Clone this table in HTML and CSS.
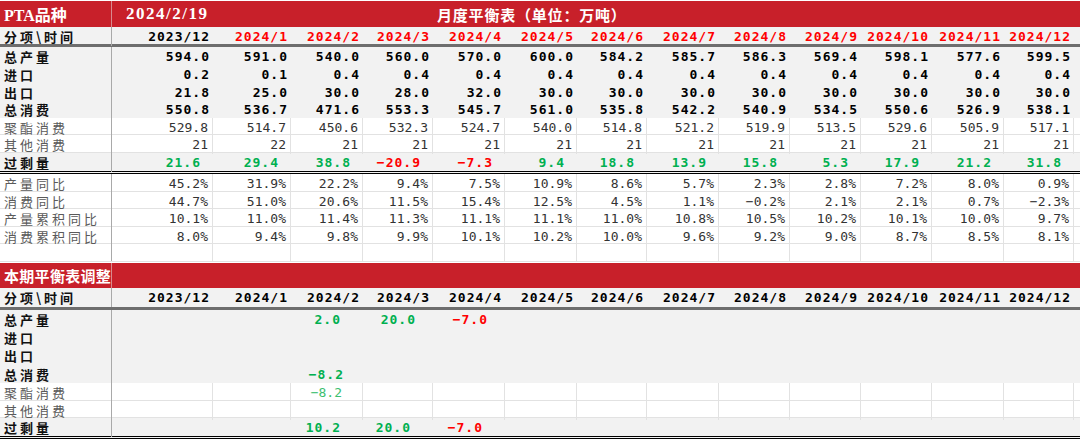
FILE: index.html
```html
<!DOCTYPE html>
<html lang="zh">
<head>
<meta charset="utf-8">
<title>PTA月度平衡表</title>
<link rel="stylesheet" href="styles.css">
</head>
<body>
<div class="sheet">
  <div class="topgap"></div>

  <div class="bar bar-title">
    <div class="bar-first">PTA品种</div>
    <div class="bar-date">2024/2/19</div>
    <div class="bar-caption">月度平衡表（单位：万吨）</div>
  </div>

  <div class="row g head h17">
    <div class="lab b">分项\时间</div>
    <div class="c b">2023/12</div>
    <div class="c b red">2024/1</div><div class="c b red">2024/2</div><div class="c b red">2024/3</div>
    <div class="c b red">2024/4</div><div class="c b red">2024/5</div><div class="c b red">2024/6</div>
    <div class="c b red">2024/7</div><div class="c b red">2024/8</div><div class="c b red">2024/9</div>
    <div class="c b red">2024/10</div><div class="c b red">2024/11</div><div class="c b red">2024/12</div>
  </div>

  <div class="row g h18">
    <div class="lab b">总产量</div>
    <div class="c b">594.0</div><div class="c b">591.0</div><div class="c b">540.0</div><div class="c b">560.0</div>
    <div class="c b">570.0</div><div class="c b">600.0</div><div class="c b">584.2</div><div class="c b">585.7</div>
    <div class="c b">586.3</div><div class="c b">569.4</div><div class="c b">598.1</div><div class="c b">577.6</div>
    <div class="c b">599.5</div>
  </div>
  <div class="row g h18">
    <div class="lab b">进口</div>
    <div class="c b">0.2</div><div class="c b">0.1</div><div class="c b">0.4</div><div class="c b">0.4</div>
    <div class="c b">0.4</div><div class="c b">0.4</div><div class="c b">0.4</div><div class="c b">0.4</div>
    <div class="c b">0.4</div><div class="c b">0.4</div><div class="c b">0.4</div><div class="c b">0.4</div>
    <div class="c b">0.4</div>
  </div>
  <div class="row g h17">
    <div class="lab b">出口</div>
    <div class="c b">21.8</div><div class="c b">25.0</div><div class="c b">30.0</div><div class="c b">28.0</div>
    <div class="c b">32.0</div><div class="c b">30.0</div><div class="c b">30.0</div><div class="c b">30.0</div>
    <div class="c b">30.0</div><div class="c b">30.0</div><div class="c b">30.0</div><div class="c b">30.0</div>
    <div class="c b">30.0</div>
  </div>
  <div class="row g h18">
    <div class="lab b">总消费</div>
    <div class="c b">550.8</div><div class="c b">536.7</div><div class="c b">471.6</div><div class="c b">553.3</div>
    <div class="c b">545.7</div><div class="c b">561.0</div><div class="c b">535.8</div><div class="c b">542.2</div>
    <div class="c b">540.9</div><div class="c b">534.5</div><div class="c b">550.6</div><div class="c b">526.9</div>
    <div class="c b">538.1</div>
  </div>
  <div class="row w h17">
    <div class="lab">聚酯消费</div>
    <div class="c">529.8</div><div class="c">514.7</div><div class="c">450.6</div><div class="c">532.3</div>
    <div class="c">524.7</div><div class="c">540.0</div><div class="c">514.8</div><div class="c">521.2</div>
    <div class="c">519.9</div><div class="c">513.5</div><div class="c">529.6</div><div class="c">505.9</div>
    <div class="c">517.1</div>
  </div>
  <div class="row w h18">
    <div class="lab">其他消费</div>
    <div class="c">21</div><div class="c">22</div><div class="c">21</div><div class="c">21</div>
    <div class="c">21</div><div class="c">21</div><div class="c">21</div><div class="c">21</div>
    <div class="c">21</div><div class="c">21</div><div class="c">21</div><div class="c">21</div>
    <div class="c">21</div>
  </div>
  <div class="row g dbl h18">
    <div class="lab b">过剩量</div>
    <div class="c b ex grn">21.6</div><div class="c b ex grn">29.4</div><div class="c b ex grn">38.8</div>
    <div class="c b ex neg">−20.9</div><div class="c b ex neg">−7.3</div>
    <div class="c b ex grn">9.4</div><div class="c b ex grn">18.8</div><div class="c b ex grn">13.9</div>
    <div class="c b ex grn">15.8</div><div class="c b ex grn">5.3</div><div class="c b ex grn">17.9</div>
    <div class="c b ex grn">21.2</div><div class="c b ex grn">31.8</div>
  </div>

  <div class="row w h18">
    <div class="lab">产量同比</div>
    <div class="c">45.2%</div><div class="c">31.9%</div><div class="c">22.2%</div><div class="c">9.4%</div>
    <div class="c">7.5%</div><div class="c">10.9%</div><div class="c">8.6%</div><div class="c">5.7%</div>
    <div class="c">2.3%</div><div class="c">2.8%</div><div class="c">7.2%</div><div class="c">8.0%</div>
    <div class="c">0.9%</div>
  </div>
  <div class="row w h17">
    <div class="lab">消费同比</div>
    <div class="c">44.7%</div><div class="c">51.0%</div><div class="c">20.6%</div><div class="c">11.5%</div>
    <div class="c">15.4%</div><div class="c">12.5%</div><div class="c">4.5%</div><div class="c">1.1%</div>
    <div class="c">−0.2%</div><div class="c">2.1%</div><div class="c">2.1%</div><div class="c">0.7%</div>
    <div class="c">−2.3%</div>
  </div>
  <div class="row w h18">
    <div class="lab">产量累积同比</div>
    <div class="c">10.1%</div><div class="c">11.0%</div><div class="c">11.4%</div><div class="c">11.3%</div>
    <div class="c">11.1%</div><div class="c">11.1%</div><div class="c">11.0%</div><div class="c">10.8%</div>
    <div class="c">10.5%</div><div class="c">10.2%</div><div class="c">10.1%</div><div class="c">10.0%</div>
    <div class="c">9.7%</div>
  </div>
  <div class="row w h17">
    <div class="lab">消费累积同比</div>
    <div class="c">8.0%</div><div class="c">9.4%</div><div class="c">9.8%</div><div class="c">9.9%</div>
    <div class="c">10.1%</div><div class="c">10.2%</div><div class="c">10.0%</div><div class="c">9.6%</div>
    <div class="c">9.2%</div><div class="c">9.0%</div><div class="c">8.7%</div><div class="c">8.5%</div>
    <div class="c">8.1%</div>
  </div>
  <div class="row w h18">
    <div class="lab"></div>
    <div class="c"></div><div class="c"></div><div class="c"></div><div class="c"></div>
    <div class="c"></div><div class="c"></div><div class="c"></div><div class="c"></div>
    <div class="c"></div><div class="c"></div><div class="c"></div><div class="c"></div>
    <div class="c"></div>
  </div>

  <div class="bar bar-sub">
    <div class="bar-first sub">本期平衡表调整</div>
  </div>

  <div class="row g head h19">
    <div class="lab b">分项\时间</div>
    <div class="c b">2023/12</div><div class="c b">2024/1</div><div class="c b">2024/2</div><div class="c b">2024/3</div>
    <div class="c b">2024/4</div><div class="c b">2024/5</div><div class="c b">2024/6</div><div class="c b">2024/7</div>
    <div class="c b">2024/8</div><div class="c b">2024/9</div><div class="c b">2024/10</div><div class="c b">2024/11</div>
    <div class="c b">2024/12</div>
  </div>

  <div class="row g h18">
    <div class="lab b">总产量</div>
    <div class="c"></div><div class="c"></div>
    <div class="c b adj grn p23">2.0</div><div class="c b adj grn p18">20.0</div><div class="c b adj neg p18">−7.0</div>
    <div class="c"></div><div class="c"></div><div class="c"></div><div class="c"></div>
    <div class="c"></div><div class="c"></div><div class="c"></div><div class="c"></div>
  </div>
  <div class="row g h18">
    <div class="lab b">进口</div>
  </div>
  <div class="row g h19">
    <div class="lab b">出口</div>
  </div>
  <div class="row g h18">
    <div class="lab b">总消费</div>
    <div class="c"></div><div class="c"></div>
    <div class="c b adj grn p20">−8.2</div>
  </div>
  <div class="row w h18">
    <div class="lab">聚酯消费</div>
    <div class="c"></div><div class="c"></div>
    <div class="c adj lgrn p21">−8.2</div><div class="c"></div>
    <div class="c"></div><div class="c"></div><div class="c"></div><div class="c"></div>
    <div class="c"></div><div class="c"></div><div class="c"></div><div class="c"></div>
    <div class="c"></div>
  </div>
  <div class="row w h17">
    <div class="lab">其他消费</div>
    <div class="c"></div><div class="c"></div><div class="c"></div><div class="c"></div>
    <div class="c"></div><div class="c"></div><div class="c"></div><div class="c"></div>
    <div class="c"></div><div class="c"></div><div class="c"></div><div class="c"></div>
    <div class="c"></div>
  </div>
  <div class="row g dbl h18">
    <div class="lab b">过剩量</div>
    <div class="c"></div><div class="c"></div>
    <div class="c b adj grn p23">10.2</div><div class="c b adj grn p23">20.0</div><div class="c b adj neg p23">−7.0</div>
  </div>
</div>
</body>
</html>
```

FILE: styles.css
```css
* { box-sizing: border-box; }

html, body {
  margin: 0;
  padding: 0;
  background: #ffffff;
}

.sheet {
  width: 1080px;
  height: 440px;
  overflow: hidden;
  background: #ffffff;
  font-family: "DejaVu Sans Mono", "Noto Sans CJK SC", monospace;
  font-size: 13px;
  color: #333333;
}

.topgap { height: 1px; }

/* red bars */
.bar {
  display: flex;
  background: #c8202a;
  color: #ffffff;
  font-weight: bold;
}
.bar-title { height: 26px; align-items: center; }
.bar-sub { height: 25px; margin-top: 1px; align-items: center; }

.bar-first {
  width: 112px;
  height: 100%;
  flex: none;
  display: flex;
  align-items: center;
  padding-left: 4px;
  border-right: 1px solid #d98a8e;
  font-family: "Liberation Serif", "Noto Sans CJK SC", serif;
  font-size: 16px;
  white-space: nowrap;
}
.bar-first.sub {
  padding-left: 4px;
  font-family: "Noto Sans CJK SC", sans-serif;
  font-size: 15px;
  letter-spacing: 0.3px;
  overflow: visible;
}
.bar-date {
  width: 101px;
  flex: none;
  padding-left: 14px;
  font-family: "Liberation Serif", serif;
  font-size: 17px;
  letter-spacing: 1.5px;
  white-space: nowrap;
}
.bar-caption {
  padding-left: 224px;
  font-family: "Noto Sans CJK SC", sans-serif;
  font-size: 15px;
  letter-spacing: 0.8px;
  white-space: nowrap;
}

/* grid rows */
.row {
  display: grid;
  grid-template-columns: 112px 101px 78px 72px 70px 72px 72px 70px 72px 71px 71px 71px 72px 70px;
}
.h17 { height: 17px; }
.h18 { height: 18px; }
.h19 { height: 19px; }

.row.g { background: #f2f2f2; }
.row.w { background: #ffffff; }

.row.head { border-bottom: 3px solid #6e6e6e; }
.row.head.h17 { height: 20px; }
.row.head.h19 { height: 22px; }

.row.dbl { border-bottom: 3px double #000000; }
.row.dbl.h18 { height: 21px; }

.row.w { border-bottom: 1px solid #e2e2e2; }
.row.w > .c { border-right: 1px solid #e2e2e2; }

.c {
  display: flex;
  align-items: center;
  justify-content: flex-end;
  padding-right: 4px;
  white-space: nowrap;
  color: #333333;
}

.lab {
  display: flex;
  align-items: center;
  padding-left: 4px;
  border-right: 1px solid #a9a9a9;
  font-family: "Noto Sans CJK SC", sans-serif;
  font-size: 13px;
  letter-spacing: 3px;
  color: #5a5a5a;
  white-space: nowrap;
}
.lab.b {
  font-weight: bold;
  color: #111111;
}

.c.b {
  font-weight: bold;
  letter-spacing: 1px;
  padding-right: 3px;
  color: #000000;
}

.c.red { color: #ff0000; }
.c.ex { padding-right: 12px; }
.c.grn { color: #00b050; }
.c.neg { color: #ff0000; }
.c.lgrn { color: #3cc070; }

.c.p18 { padding-right: 17px; }
.c.p20 { padding-right: 19px; }
.c.p21 { padding-right: 20px; }
.c.p23 { padding-right: 22px; }
```
